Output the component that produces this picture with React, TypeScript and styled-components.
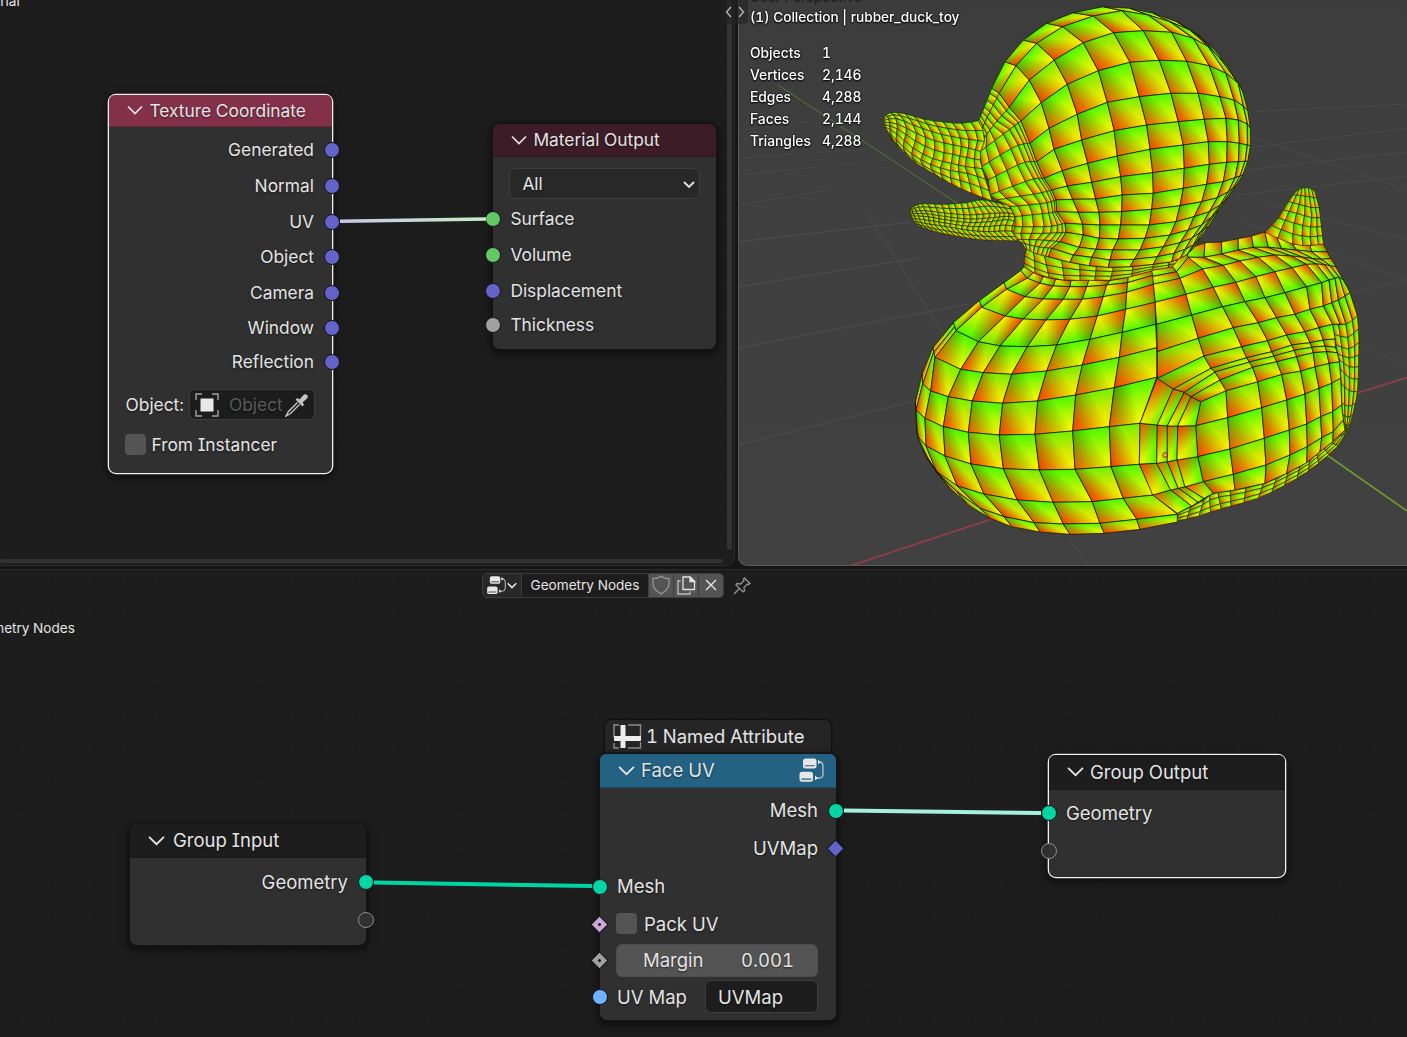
import React from "react";
import styled, { createGlobalStyle, css } from "styled-components";

const Global = createGlobalStyle`
  * { box-sizing: border-box; }
  body { margin: 0; background: #161616; overflow: hidden; }
  #root { font-family: Inter, "Liberation Sans", sans-serif; font-feature-settings: "cv08" 1, "tnum" 1; }
`;

/* ---------- duck mesh ---------- */

type P = [number, number];
type Quad = { p: P[]; f: number; s: number; odd: boolean };

const frames = {
  head: [870, 0],
  body: [890, 240],
  rear: [1130, 170],
} as const;

const rows = (frame: keyof typeof frames, data: number[][]): P[][] =>
  data.map((r) => {
    const out: P[] = [];
    for (let i = 0; i < r.length; i += 2) {
      out.push([frames[frame][0] + r[i] / 3 - 738, frames[frame][1] + r[i + 1] / 3]);
    }
    return out;
  });

const spline = (pts: P[], t: number): P => {
  const n = pts.length - 1;
  const x = Math.min(Math.max(t * n, 0), n);
  const i = Math.min(Math.floor(x), n - 1);
  const k = x - i;
  const a = pts[Math.max(i - 1, 0)];
  const b = pts[i];
  const c = pts[i + 1];
  const d = pts[Math.min(i + 2, n)];
  const f = (j: 0 | 1) =>
    0.5 *
    (2 * b[j] +
      (c[j] - a[j]) * k +
      (2 * a[j] - 5 * b[j] + 4 * c[j] - d[j]) * k * k +
      (3 * b[j] - a[j] - 3 * c[j] + d[j]) * k * k * k);
  return [f(0), f(1)];
};

const patch = (grid: P[][], nu?: number, nv?: number, f = 0): Quad[] => {
  let g = grid;
  if (nu) g = g.map((r) => Array.from({ length: nu + 1 }, (_, i) => spline(r, i / nu)));
  if (nv) {
    const cols = g[0].map((_, c) => g.map((r) => r[c]));
    g = Array.from({ length: nv + 1 }, (_, j) => cols.map((c) => spline(c, j / nv)));
  }
  const out: Quad[] = [];
  for (let j = 0; j < g.length - 1; j++)
    for (let i = 0; i < g[0].length - 1; i++)
      out.push({
        p: [g[j][i], g[j][i + 1], g[j + 1][i + 1], g[j + 1][i]],
        f,
        s: nu ? 0.5 : 0.7,
        odd: (i + j) % 2 === 1,
      });
  return out;
};

const headRows = rows("head", [
  [365,265, 405,185, 460,120, 530,70, 610,38, 700,20, 780,25, 850,40, 920,65, 985,105, 1028,143],
  [388,280, 438,197, 500,130, 578,80, 670,48, 755,32, 835,45, 900,65, 960,90, 1000,120, 1032,148],
  [418,322, 478,240, 553,180, 640,128, 731,98, 820,92, 905,97, 970,115, 1015,140, 1050,175, 1072,197],
  [453,363, 514,308, 592,253, 685,212, 780,187, 868,181, 950,184, 1018,197, 1068,220, 1105,250, 1118,275],
  [480,430, 537,385, 622,343, 712,307, 808,290, 903,280, 985,280, 1050,290, 1092,300, 1120,318, 1133,332],
  [500,485, 552,448, 635,420, 733,392, 830,375, 925,365, 1003,358, 1068,355, 1105,360, 1132,372, 1141,385],
  [522,535, 577,512, 653,490, 742,468, 840,448, 940,435, 1015,425, 1072,425, 1108,430, 1132,435, 1141,437],
  [545,570, 592,558, 665,547, 752,530, 848,518, 943,505, 1018,493, 1070,487, 1105,485, 1125,484, 1133,484],
  [558,600, 608,598, 677,597, 757,585, 850,580, 940,565, 1010,553, 1060,545, 1095,533, 1110,528, 1118,525],
  [560,635, 625,637, 687,637, 755,635, 845,628, 930,617, 995,605, 1042,593, 1075,575, 1088,565, 1095,560],
  [585,670, 638,673, 690,675, 752,675, 838,675, 918,665, 972,650, 1018,635, 1050,615, 1063,603, 1072,595],
  [588,697, 640,705, 688,715, 745,717, 825,715, 900,705, 955,690, 995,675, 1025,650, 1035,642, 1044,634],
  [570,725, 628,742, 678,748, 728,750, 810,750, 880,740, 930,728, 965,715, 990,698, 1002,688, 1014,680],
  [545,745, 610,765, 665,772, 720,780, 793,778, 862,770, 912,760, 945,748, 970,735, 980,725, 990,715],
  [535,770, 600,787, 658,797, 715,802, 780,800, 850,793, 905,785, 930,775, 950,765, 960,755, 972,743],
]);
const face = rows("head", [
  [325,362, 340,330, 365,265],
  [335,390, 355,345, 388,280],
  [345,412, 375,370, 418,322],
  [330,455, 410,395, 453,363],
  [335,500, 435,440, 480,430],
  [355,540, 455,490, 500,485],
  [360,585, 480,540, 522,535],
  [380,600, 505,580, 545,570],
  [420,620, 522,610, 558,600],
  [435,650, 528,640, 560,635],
  [435,680, 535,680, 585,670],
  [430,700, 530,700, 588,697],
  [440,718, 510,720, 570,725],
  [455,728, 500,740, 545,745],
  [465,745, 495,760, 535,770],
]);
const upperBeak = rows("head", [
  [42,352, 60,338, 105,341, 160,357, 220,366, 275,370, 325,362],
  [41,360, 75,350, 125,366, 180,385, 240,400, 295,408, 345,412],
  [42,368, 82,375, 140,405, 195,428, 250,440, 295,450, 330,460],
  [45,380, 80,398, 130,440, 190,472, 245,485, 285,495, 335,500],
  [52,395, 78,425, 125,468, 180,500, 240,520, 295,530, 350,550],
  [62,412, 85,440, 138,490, 195,523, 245,552, 305,580, 365,602],
]);
const lowerBeak = rows("head", [
  [120,628, 150,612, 220,613, 290,608, 335,600, 400,612, 470,620],
  [120,636, 160,632, 230,640, 300,645, 370,640, 420,640, 480,650],
  [124,648, 170,650, 230,660, 300,668, 360,665, 420,660, 490,680],
  [132,664, 175,672, 230,680, 290,690, 350,695, 410,693, 490,698],
  [146,678, 200,696, 260,708, 320,718, 380,721, 440,722, 490,716],
]);
const neck = rows("body", [
  [410,22, 435,40, 475,50, 540,67, 598,77, 655,82, 720,80, 790,73],
  [403,62, 440,78, 485,92, 542,98, 598,100, 650,102, 718,98, 787,84],
  [402,80, 440,102, 490,115, 543,122, 597,120, 645,122, 715,112, 785,92],
]);
const neckBack = rows("head", [
  [850,793, 905,785, 930,775, 950,765, 972,743],
  [842,814, 908,802, 948,795, 970,775, 990,735],
]);
const shoulder = rows("body", [
  [402,80, 430,98, 460,110, 497,118, 543,122, 597,120, 660,122, 715,112, 785,92],
  [392,92, 412,115, 450,130, 490,138, 540,140, 590,140, 650,135, 713,128, 788,106],
  [342,128, 350,148, 405,170, 460,177, 520,178, 577,178, 640,170, 710,157, 790,133],
  [268,182, 275,202, 345,228, 400,237, 468,240, 540,238, 622,228, 707,208, 795,187],
  [190,248, 198,272, 265,305, 330,318, 412,320, 500,315, 600,298, 697,277, 797,253],
]);
const belly = rows("body", [
  [190,248, 194,260, 198,272, 265,305, 330,318, 412,320, 500,315, 600,298, 697,277, 797,253],
  [129,322, 131,336, 135,352, 212,388, 280,398, 365,403, 470,393, 577,375, 688,352, 800,323],
  [96,402, 98,432, 122,453, 175,470, 247,483, 338,490, 443,483, 557,465, 673,443, 800,412],
]);
const bellyLow = rows("body", [
  [96,402, 98,432, 122,453, 175,470, 247,483, 338,490, 443,483, 557,465, 673,443, 800,412],
  [76,485, 78,510, 105,535, 160,560, 235,577, 328,585, 435,583, 548,573, 658,560, 750,550],
  [80,570, 83,590, 108,618, 165,648, 243,672, 340,686, 448,690, 555,688, 663,680, 748,673],
  [98,628, 112,655, 140,695, 202,738, 282,762, 382,780, 490,787, 607,785, 700,775, 790,765],
  [135,690, 150,708, 200,755, 270,805, 343,830, 433,848, 520,852, 630,850, 740,838, 862,823],
  [150,710, 180,745, 235,795, 300,835, 365,860, 450,876, 540,883, 643,880, 750,868, 862,846],
]);
const back = rows("rear", [
  [62,302, 128,290, 165,240, 225,218, 275,216, 325,206, 365,198, 405,186, 440,200, 488,222, 540,226, 580,222],
  [65,320, 140,305, 175,262, 222,262, 275,252, 325,240, 370,232, 415,232, 455,236, 500,240, 545,245, 592,245],
  [70,343, 150,325, 218,297, 280,286, 330,273, 385,262, 435,255, 485,258, 520,262, 550,266, 575,268, 602,265],
  [75,397, 168,373, 250,352, 318,337, 378,320, 435,305, 487,293, 530,283, 560,282, 585,284, 603,288, 618,290],
  [80,463, 185,435, 278,410, 345,395, 405,383, 465,368, 530,350, 575,338, 597,330, 615,325, 628,322, 640,330],
  [82,545, 205,505, 310,473, 385,458, 440,443, 495,433, 540,418, 580,408, 605,398, 625,390, 645,378, 660,368],
  [82,625, 222,558, 335,530, 413,512, 470,495, 525,485, 567,473, 608,463, 630,462, 648,463, 668,452, 682,438],
]);
const wingRing = rows("rear", [
  [142,1030, 68,975, 28,882, 30,760, 82,625, 222,558, 335,530, 413,512, 470,495, 525,485, 567,473, 608,463],
  [185,1008, 122,960, 80,880, 82,765, 130,657, 243,595, 350,563, 425,545, 485,525, 540,518, 580,510, 615,507],
  [205,996, 145,955, 112,875, 112,768, 163,667, 255,606, 358,576, 432,558, 493,541, 545,532, 585,528, 616,532],
  [222,985, 165,950, 141,870, 143,768, 183,680, 270,630, 368,592, 440,575, 500,560, 550,548, 590,545, 622,548],
  [250,970, 220,935, 203,860, 197,767, 212,695, 288,662, 383,635, 455,613, 512,603, 555,590, 597,580, 628,575],
]);
const wing = rows("rear", [
  [212,695, 288,662, 383,635, 455,613, 512,603, 555,590, 597,580, 628,575],
  [197,767, 293,743, 395,713, 470,690, 525,672, 567,655, 605,640, 632,625],
  [203,860, 300,837, 403,805, 478,780, 530,762, 572,740, 608,725, 635,705],
  [220,935, 310,913, 408,885, 480,855, 532,830, 575,803, 610,785, 640,750],
  [250,970, 315,960, 405,940, 470,910, 530,878, 570,845, 608,815, 645,780],
]);
const underside = rows("rear", [
  [142,1030, 215,995, 250,970, 315,960, 405,940, 470,910, 530,878, 570,845, 608,815, 645,780],
  [142,1052, 200,1040, 260,1020, 315,1005, 390,982, 460,948, 525,910, 580,868, 630,820, 660,762],
]);
const rump = rows("rear", [
  [608,463, 648,463, 682,438],
  [615,507, 655,520, 686,495],
  [622,548, 657,560, 686,550],
  [628,575, 658,600, 685,600],
  [632,625, 658,650, 683,655],
  [635,705, 655,715, 675,705],
  [640,750, 652,755, 662,755],
  [645,780, 648,785, 652,785],
]);
const tail = rows("rear", [
  [500,62, 515,55, 535,53, 553,62],
  [482,84, 510,90, 540,97, 564,98],
  [460,120, 500,130, 545,143, 571,143],
  [436,155, 490,175, 540,185, 575,182],
  [405,187, 488,222, 543,226, 580,222],
]);

const mesh: Quad[] = [
  ...patch(underside, 16, 3),
  ...patch(neckBack, 5, 2),
  ...patch(back.slice(0, 5), undefined, undefined, 1),
  ...patch(back.slice(4)),
  ...patch(tail, 6, 6),
  ...patch(shoulder, undefined, undefined, 1),
  ...patch(belly),
  ...patch(bellyLow),
  ...patch(rump, 4, 10),
  ...patch(wing),
  ...patch(wingRing.map((r) => r.slice(0, 5)), undefined, undefined, 1),
  ...patch(wingRing.map((r) => r.slice(4))),
  ...patch(neck, 8, 3),
  ...patch(lowerBeak, 22, 8),
  ...patch(face, 7, undefined),
  ...patch(upperBeak, 12, 8),
  ...patch(headRows),
];

const fix = (n: number) => n.toFixed(1);

/* Foot of the perpendicular from a point to the line a-b. */
const foot = (p: P, a: P, b: P): P => {
  const dx = b[0] - a[0];
  const dy = b[1] - a[1];
  const t = ((p[0] - a[0]) * dx + (p[1] - a[1]) * dy) / (dx * dx + dy * dy || 1);
  return [a[0] + dx * t, a[1] + dy * t];
};

const Tint = styled.polygon`
  mix-blend-mode: multiply;
`;

const Face = ({ q, i }: { q: Quad; i: number }) => {
  const p = q.f ? [q.p[2], q.p[3], q.p[0], q.p[1]] : q.p;
  const low: P = [(p[2][0] + p[3][0]) / 2, (p[2][1] + p[3][1]) / 2];
  const high = foot(low, p[0], p[1]);
  const shifted: P = [p[0][0] + (p[1][0] - p[0][0]) * 0.4, p[0][1] + (p[1][1] - p[0][1]) * 0.4];
  const end = foot(p[3], shifted, p[2]);
  const pts = q.p.map((v) => v.map(fix).join(",")).join(" ");
  const ramp = q.odd ? ["#74f000", "#ccea00", "#fff200"] : ["#4cf800", "#aef800", "#fbfa00"];
  const warm = q.odd ? ["#ff3cff", "#f488ff", "#f4d4ff", "#ffffff"] : ["#ff54ff", "#e69cff", "#e4dcff", "#ffffff"];
  return (
    <g>
      <linearGradient id={`r${i}`} gradientUnits="userSpaceOnUse" x1={high[0]} y1={high[1]} x2={low[0]} y2={low[1]}>
        <stop offset="0" stopColor={ramp[0]} />
        <stop offset=".5" stopColor={ramp[1]} />
        <stop offset="1" stopColor={ramp[2]} />
      </linearGradient>
      <linearGradient id={`g${i}`} gradientUnits="userSpaceOnUse" x1={p[3][0]} y1={p[3][1]} x2={end[0]} y2={end[1]}>
        <stop offset="0" stopColor={warm[0]} />
        <stop offset=".4" stopColor={warm[1]} />
        <stop offset=".75" stopColor={warm[2]} />
        <stop offset="1" stopColor={warm[3]} />
      </linearGradient>
      <polygon points={pts} fill={`url(#r${i})`} />
      <Tint points={pts} fill={`url(#g${i})`} />
      <polygon points={pts} fill="none" stroke="#0e1000" strokeWidth={q.s} />
    </g>
  );
};

const ViewportSvg = styled.svg`
  position: absolute;
  left: -1px;
  top: 0;
  width: 669px;
  height: 566px;
`;

const Duck = () => (
  <ViewportSvg viewBox="0 0 669 566">
    <g stroke="#525252" strokeWidth="1" opacity=".8">
      <path d="M0 445L185 399M0 348L230 304M0 287L180 258M0 242L172 222M130 215L205 333M320 522L350 566" />
      <path d="M508 148L669 128M508 170L669 152M500 195L669 176M530 205L669 239M505 222L669 280M580 300L669 280M590 330L669 366M510 112L669 104M508 135L669 190" opacity=".7" />
      <path d="M0 205L90 190M0 175L150 160M0 158L145 148M0 130L70 122" opacity=".5" />
    </g>
    <path d="M40 85L222 205" stroke="#4f6b33" strokeWidth="1.2" />
    <path d="M586 453L669 511" stroke="#6f9a2b" strokeWidth="1.6" />
    <path d="M112 566L254 519M610 396L669 377.500" stroke="#9a3b4b" strokeWidth="1.4" />
    {mesh.map((q, i) => (
      <Face key={i} q={q} i={i} />
    ))}
    <circle cx="427" cy="455" r="2.300" fill="#ffa060" stroke="#3a2000" strokeWidth=".7" />
  </ViewportSvg>
);

/* ---------- window areas ---------- */

const Screen = styled.div`
  width: 1407px;
  height: 1037px;
  display: grid;
  grid-template-rows: 566px 468px;
  row-gap: 3px;
  background: #161616;
  color: #e4e4e4;
  overflow: hidden;
`;
const TopAreas = styled.div`
  display: grid;
  grid-template-columns: 735px 669px;
  column-gap: 3px;
`;
const dots = css<{ $pitch: number; $ox: number; $oy: number }>`
  background-color: #1d1d1d;
  background-image: radial-gradient(circle, #242424 0, #222 1px, transparent 1.6px);
  background-size: ${(p) => p.$pitch}px ${(p) => p.$pitch}px;
  background-position: ${(p) => p.$ox}px ${(p) => p.$oy}px;
`;
const ShaderArea = styled.section<{ $pitch: number; $ox: number; $oy: number }>`
  position: relative;
  ${dots}
  border: 1px solid #2b2b2b;
  border-width: 0 1px 1px 0;
  border-radius: 0 0 9px 0;
  overflow: hidden;
`;
const GeometryArea = styled.section<{ $pitch: number; $ox: number; $oy: number }>`
  position: relative;
  ${dots}
  border-top: 1px solid #2b2b2b;
`;
const Viewport = styled.section`
  position: relative;
  background: linear-gradient(#3c3c3c, #404040 40%, #414141);
  border: 1px solid #5a5a5a;
  border-width: 0 0 1px 1px;
  border-radius: 0 0 0 9px;
  overflow: hidden;
`;
const ScrollV = styled.div`
  position: absolute;
  right: 2px;
  top: 0;
  width: 5px;
  height: 550px;
  border-radius: 3px;
  background: #333;
`;
const ScrollH = styled.div`
  position: absolute;
  left: 0;
  bottom: 2px;
  width: 723px;
  height: 4px;
  border-radius: 2px;
  background: #333;
`;
const SplitHandle = styled.div`
  position: absolute;
  left: 722px;
  top: 0;
  width: 26px;
  height: 24px;
  display: flex;
  align-items: center;
  justify-content: center;
  border-radius: 0 0 4px 4px;
  background: #2229;
`;
const Crumb = styled.div<{ $x: number; $y: number }>`
  position: absolute;
  left: ${(p) => p.$x}px;
  top: ${(p) => p.$y}px;
  font-size: 13.6px;
  line-height: 18px;
  white-space: nowrap;
`;
const Overlay = styled.div`
  position: absolute;
  left: 11px;
  top: -13px;
  color: #fff;
  font-size: 13.65px;
  line-height: 20px;
  font-weight: 500;
  text-shadow: 0 1px 2px #000, 0 0 2px #000;
`;
const Dim = styled.div`
  color: #222;
  text-shadow: none;
`;
const Stats = styled.dl`
  margin: 15px 0 0;
  display: grid;
  grid-template-columns: 72px auto;
  grid-auto-rows: 22px;
  font-size: 13.8px;
  line-height: 22px;
  dt, dd { margin: 0; }
`;

/* ---------- nodes ---------- */

const Links = styled.svg`
  position: absolute;
  left: 0;
  top: 0;
  width: 100%;
  height: 100%;
`;
const NodeBox = styled.article<{ $x: number; $y: number; $w: number; $h: number; $selected?: boolean; $size: number }>`
  position: absolute;
  left: ${(p) => p.$x}px;
  top: ${(p) => p.$y}px;
  width: ${(p) => p.$w}px;
  height: ${(p) => p.$h}px;
  display: flex;
  flex-direction: column;
  border-radius: 7px;
  background: #303030;
  font-size: ${(p) => p.$size}px;
  text-shadow: 0 1px 2px #0008;
  box-shadow: ${(p) => (p.$selected ? "0 0 0 1.3px #f0f0f0, " : "0 0 0 1.5px #141414, ")} 0 3px 9px 2px #0009;
`;
const Header = styled.header<{ $bg: string; $h: number; $gap: number }>`
  flex: none;
  height: ${(p) => p.$h}px;
  padding: 0 12px 1px 18px;
  display: flex;
  align-items: center;
  gap: ${(p) => p.$gap}px;
  border-radius: 6px 6px 0 0;
  background: ${(p) => p.$bg};
  border-bottom: 1px solid #0003;
`;
const Spacer = styled.span`
  flex: 1;
`;
const Row = styled.div<{ $h: number; $right?: boolean }>`
  position: relative;
  flex: none;
  height: ${(p) => p.$h}px;
  padding: 0 18px 1px 17px;
  display: flex;
  align-items: center;
  justify-content: ${(p) => (p.$right ? "flex-end" : "flex-start")};
  white-space: nowrap;
`;
const Socket = styled.i<{ $c: string; $side: "left" | "right"; $shape?: "diamond" | "empty" }>`
  position: absolute;
  ${(p) => p.$side}: -8px;
  top: calc(50% - 8px);
  width: 16px;
  height: 16px;
  border-radius: 50%;
  background: ${(p) => p.$c};
  border: 1px solid #15151f;
  ${(p) => p.$shape === "empty" && css`border: 1.5px solid #8d8d8d;`}
  ${(p) =>
    p.$shape === "diamond" &&
    css`
      width: 13px;
      height: 13px;
      top: calc(50% - 6.5px);
      ${p.$side}: ${p.$side === "left" ? -7 : -6}px;
      border-radius: 1px;
      transform: rotate(45deg);
    `}
`;
const Pip = styled.b`
  position: absolute;
  left: 4px;
  top: 4px;
  width: 3px;
  height: 3px;
  border-radius: 50%;
  background: #111;
`;
const Gap = styled.div<{ $h: number }>`
  flex: none;
  height: ${(p) => p.$h}px;
`;
const Check = styled.span<{ $gap?: number }>`
  width: 21px;
  height: 21px;
  margin: 0 ${(p) => p.$gap ?? 6}px 0 -1px;
  border-radius: 4px;
  background: #545454;
`;
const Field = styled.span<{ $bg: string; $w: number; $h: number }>`
  flex: none;
  width: ${(p) => p.$w}px;
  height: ${(p) => p.$h}px;
  display: flex;
  align-items: center;
  border: 1px solid #3d3d3d;
  border-radius: 6px;
  background: ${(p) => p.$bg};
`;
const ObjectField = styled(Field)`
  margin-left: 5px;
  padding: 0 5px;
  color: #5b5b5b;
  gap: 10px;
  svg:last-child { margin-left: -8px; }
`;
const SelectField = styled(Field)`
  margin-left: -1px;
  padding: 0 3px 0 12px;
  justify-content: space-between;
`;
const NumberField = styled(Field)`
  margin-left: -1px;
  padding: 0 23px 0 26px;
  justify-content: space-between;
  border-color: #4c4c4c;
`;
const NameField = styled(Field)`
  margin-left: auto;
  padding-left: 12px;
`;
const AttributeTab = styled.div`
  position: absolute;
  left: 605px;
  top: 150px;
  width: 226px;
  height: 36px;
  padding: 0 8px 4px;
  display: flex;
  align-items: center;
  gap: 4px;
  border-radius: 6px 6px 0 0;
  background: #252525;
  box-shadow: 0 0 0 1.5px #121212;
  font-size: 18.4px;
`;
const Title = styled.span`
  white-space: nowrap;
`;

const TreeBar = styled.div`
  position: absolute;
  left: 482px;
  top: 3px;
  display: flex;
  align-items: center;
  height: 25px;
  font-size: 13.6px;
`;
const Seg = styled.div<{ $w: number; $bg: string; $edge?: "l" | "r" }>`
  width: ${(p) => p.$w}px;
  height: 25px;
  padding-bottom: 1px;
  display: flex;
  align-items: center;
  justify-content: center;
  white-space: nowrap;
  background: ${(p) => p.$bg};
  border: 1px solid #3d3d3d;
  border-left-width: ${(p) => (p.$edge === "l" ? 1 : 0)}px;
  border-radius: ${(p) => (p.$edge === "l" ? "5px 0 0 5px" : p.$edge === "r" ? "0 5px 5px 0" : "0")};
`;
const PinBox = styled.div`
  margin-left: 9px;
  display: flex;
`;

/* ---------- icons ---------- */

const Chevron = ({ w = 16, s = 1.7 }: { w?: number; s?: number }) => (
  <svg width={w} height={w} viewBox="0 0 16 16" fill="none" stroke="#e6e6e6" strokeWidth={s}>
    <path d="M1 4.500L8 11.500L15 4.500" />
  </svg>
);
const SmallChevron = ({ w = 14 }: { w?: number }) => (
  <svg width={w} height={w} viewBox="0 0 14 14" fill="none" stroke="#e6e6e6" strokeWidth="1.8">
    <path d="M2 5L7 10L12 5" />
  </svg>
);
const NodeTreeIcon = ({ w = 26, line = "#246283" }: { w?: number; line?: string }) => (
  <svg width={w} height={w} viewBox="0 0 26 26" fill="none">
    <rect x="5" y="1.500" width="13.500" height="10" rx="2.500" fill="#e6e6e6" />
    <rect x="1.500" y="14.800" width="13.500" height="10" rx="2.500" fill="#e6e6e6" />
    <path d="M6.800 8.800h10M3.300 22.100h10" stroke={line} strokeWidth="1.100" />
    <path d="M20 5h1.500q3.500 0 3.500 4v8q0 4-3.500 4h-3" stroke="#b9c4ca" strokeWidth="1.300" />
    <path d="M20 3l3 2-3 2.500zM17 18.500l3 2.500-3 2.500z" fill="#e6e6e6" />
  </svg>
);
const ObjectIcon = () => (
  <svg width="24" height="24" viewBox="0 0 24 24" fill="none">
    <rect x="5.500" y="5.500" width="13" height="13" fill="#e8e8e8" />
    <path d="M1 7V1h6M17 1h6v6M23 17v6h-6M7 23H1v-6" stroke="#a2a2a2" strokeWidth="1.400" />
  </svg>
);
const DropperIcon = () => (
  <svg width="24" height="24" viewBox="0 0 24 24" fill="none">
    <path d="M12.500 9.500L3.500 18.500L1 23L5.500 20.500L14.500 11.500" stroke="#c4c4c4" strokeWidth="1.400" />
    <path d="M10.500 6.500L12.500 5L14.500 6.500L18 2.500Q20 .5 22 2T21.500 6L17.500 9.500L19 11.500L17.500 13.500Z" fill="#c4c4c4" />
  </svg>
);
const SheetIcon = () => (
  <svg width="29" height="25" viewBox="0 0 29 25" fill="none">
    <path d="M6 1H1v5M15 1h12.500v11M1 19v5h5M15 24h12.500v-6M1 6v7" stroke="#8c8c8c" strokeWidth="1.400" />
    <path d="M7.500 1h5v23h-5zM1 12h27v5H1z" fill="#ececec" />
  </svg>
);
const ShieldIcon = () => (
  <svg width="18" height="20" viewBox="0 0 18 20" fill="none" stroke="#989898" strokeWidth="1.300">
    <path d="M9 1.200Q12 3.600 17 3.600V9Q16.500 15 9 18.800Q1.500 15 1 9V3.600Q6 3.600 9 1.200Z" />
  </svg>
);
const DuplicateIcon = () => (
  <svg width="19" height="19" viewBox="0 0 19 19" fill="none" stroke="#e2e2e2" strokeWidth="1.300">
    <path d="M6 1h7l4.500 4.500V13.500H6z" />
    <path d="M13 1l4.500 4.500H13z" fill="#e2e2e2" />
    <path d="M3.500 5H1v13h12v-2.500" stroke="#bdbdbd" />
  </svg>
);
const CloseIcon = () => (
  <svg width="12" height="12" viewBox="0 0 12 12" stroke="#e6e6e6" strokeWidth="1.400">
    <path d="M1 1L11 11M11 1L1 11" />
  </svg>
);
const PinIcon = () => (
  <svg width="18" height="18" viewBox="0 0 18 18" fill="none" stroke="#969696" strokeWidth="1.300">
    <path d="M11.500 1L17 6.500L15.500 7.500L14.500 7L11 10.500L11.500 14L10 15L3 8L4 6.500L7.500 7L11 3.500L10.500 2ZM6.500 11.500L1 17" />
  </svg>
);

/* ---------- screen ---------- */

const VECTOR = "#6363c7";
const SHADER = "#63c763";
const GEO = "#00d6a3";

const coordinateOutputs: [string, number][] = [
  ["Generated", 36],
  ["Normal", 36],
  ["UV", 35],
  ["Object", 36],
  ["Camera", 36],
  ["Window", 33],
  ["Reflection", 36],
];
const materialInputs: [string, number, string][] = [
  ["Surface", 36, SHADER],
  ["Volume", 36, SHADER],
  ["Displacement", 35, VECTOR],
  ["Thickness", 34, "#a1a1a1"],
];
const stats = [
  ["Objects", "1"],
  ["Vertices", "2,146"],
  ["Edges", "4,288"],
  ["Faces", "2,144"],
  ["Triangles", "4,288"],
];

export default function App() {
  return (
    <Screen>
      <Global />
      <TopAreas>
        <ShaderArea $pitch={32} $ox={0} $oy={12}>
          <Crumb $x={-32} $y={-8}>Material</Crumb>
          <NodeBox $x={108.5} $y={95} $w={223.5} $h={377.5} $size={17.35} $selected>
            <Header $bg="#83314a" $h={32} $gap={7}>
              <Chevron />
              <Title>Texture Coordinate</Title>
            </Header>
            <Gap $h={5} />
            {coordinateOutputs.map(([name, h]) => (
              <Row key={name} $h={h} $right>
                {name}
                <Socket $c={VECTOR} $side="right" />
              </Row>
            ))}
            <Row $h={50}>
              Object:
              <ObjectField $bg="#1d1d1d" $w={126} $h={31}>
                <ObjectIcon />
                Object
                <DropperIcon />
              </ObjectField>
            </Row>
            <Row $h={30}>
              <Check />
              From Instancer
            </Row>
          </NodeBox>
          <NodeBox $x={493.4} $y={124} $w={223} $h={224.5} $size={17.35}>
            <Header $bg="#3c1c26" $h={33} $gap={6}>
              <Chevron />
              <Title>Material Output</Title>
            </Header>
            <Gap $h={10} />
            <Row $h={34}>
              <SelectField $bg="#282828" $w={191} $h={31}>
                All
                <SmallChevron />
              </SelectField>
            </Row>
            {materialInputs.map(([name, h, c]) => (
              <Row key={name} $h={h}>
                {name}
                <Socket $c={c} $side="left" />
              </Row>
            ))}
          </NodeBox>
          <Links>
            <defs>
              <linearGradient id="uvLink" x1="0" x2="1">
                <stop offset="0" stopColor="#c9c6ea" />
                <stop offset="1" stopColor="#c6ecc6" />
              </linearGradient>
            </defs>
            <path d="M340 219.600L486 217.300V220.700L340 223Z" fill="url(#uvLink)" />
          </Links>
          <ScrollV />
          <ScrollH />
        </ShaderArea>
        <Viewport>
          <Duck />
          <Overlay>
            <Dim>User Perspective</Dim>
            (1) Collection | rubber_duck_toy
            <Stats>
              {stats.map(([k, v]) => (
                <React.Fragment key={k}>
                  <dt>{k}</dt>
                  <dd>{v}</dd>
                </React.Fragment>
              ))}
            </Stats>
          </Overlay>
        </Viewport>
      </TopAreas>
      <GeometryArea $pitch={33.8} $ox={5} $oy={26}>
        <TreeBar>
          <Seg $w={40} $bg="#282828" $edge="l">
            <NodeTreeIcon w={20} line="#333" />
            <SmallChevron w={12} />
          </Seg>
          <Seg $w={127} $bg="#1d1d1d">Geometry Nodes</Seg>
          <Seg $w={25} $bg="#545454"><ShieldIcon /></Seg>
          <Seg $w={25} $bg="#545454"><DuplicateIcon /></Seg>
          <Seg $w={25} $bg="#545454" $edge="r"><CloseIcon /></Seg>
          <PinBox><PinIcon /></PinBox>
        </TreeBar>
        <Crumb $x={-34} $y={49}>Geometry Nodes</Crumb>

        <NodeBox $x={130} $y={254} $w={236} $h={121} $size={18.5}>
          <Header $bg="#1d1d1d" $h={34} $gap={8}>
            <Chevron w={17} />
            <Title>Group Input</Title>
          </Header>
          <Gap $h={5} />
          <Row $h={38} $right>Geometry<Socket $c={GEO} $side="right" /></Row>
          <Row $h={37}><Socket $c="#303030" $side="right" $shape="empty" /></Row>
        </NodeBox>

        <AttributeTab>
          <SheetIcon />
          <Title>1 Named Attribute</Title>
        </AttributeTab>
        <NodeBox $x={600} $y={184} $w={236} $h={266} $size={18.5}>
          <Header $bg="#246283" $h={34} $gap={6}>
            <Chevron w={17} />
            <Title>Face UV</Title>
            <Spacer />
            <NodeTreeIcon />
          </Header>
          <Gap $h={3.5} />
          <Row $h={38} $right>Mesh<Socket $c={GEO} $side="right" /></Row>
          <Row $h={38} $right>UVMap<Socket $c={VECTOR} $side="right" $shape="diamond" /></Row>
          <Row $h={38}>Mesh<Socket $c={GEO} $side="left" /></Row>
          <Row $h={37}>
            <Check $gap={7} />
            Pack UV
            <Socket $c="#cca6d6" $side="left" $shape="diamond"><Pip /></Socket>
          </Row>
          <Row $h={36}>
            <NumberField $bg="#545454" $w={202} $h={33}>
              <span>Margin</span>
              <span>0.001</span>
            </NumberField>
            <Socket $c="#a1a1a1" $side="left" $shape="diamond"><Pip /></Socket>
          </Row>
          <Row $h={37}>
            UV Map
            <NameField $bg="#1d1d1d" $w={113} $h={33}>UVMap</NameField>
            <Socket $c="#70b2ff" $side="left" />
          </Row>
        </NodeBox>

        <NodeBox $x={1049} $y={185} $w={236} $h={122} $size={18.5} $selected>
          <Header $bg="#1d1d1d" $h={35} $gap={6}>
            <Chevron w={17} />
            <Title>Group Output</Title>
          </Header>
          <Gap $h={4} />
          <Row $h={38}>Geometry<Socket $c={GEO} $side="left" /></Row>
          <Row $h={37}><Socket $c="#303030" $side="left" $shape="empty" /></Row>
        </NodeBox>
        <Links>
          <path d="M374 312.500L592 316" stroke="#00d6a3" strokeWidth="4" />
          <path d="M844 240.500L1041 243" stroke="#a5efdd" strokeWidth="4" />
        </Links>
      </GeometryArea>
      <SplitHandle>
        <svg width="20" height="12" viewBox="0 0 20 12" fill="none" stroke="#b0b0b0" strokeWidth="1.500">
          <path d="M6 1L1.500 6L6 11M14 1L18.500 6L14 11" />
        </svg>
      </SplitHandle>
    </Screen>
  );
}
